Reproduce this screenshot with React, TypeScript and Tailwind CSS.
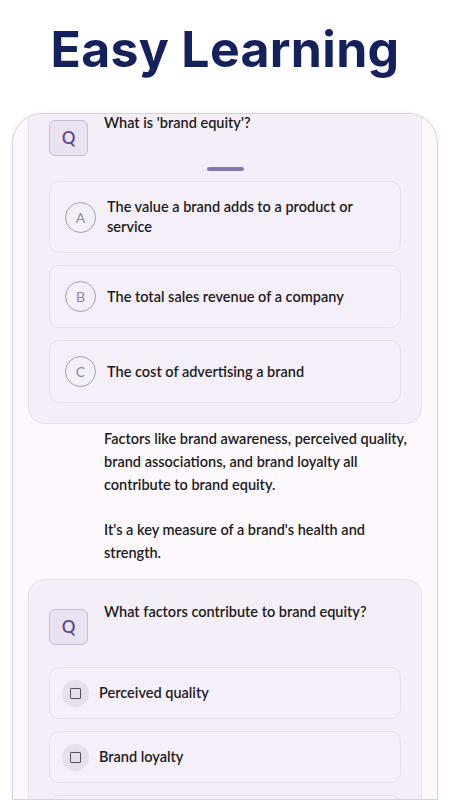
import React from "react";

const body = { fontFamily: "Lato, 'Noto Sans', sans-serif" };

function QBadge() {
  return (
    <div className="mt-[7px] flex h-[36px] w-[39px] shrink-0 items-center justify-center rounded-md border border-[#c6bcdb] bg-[#e8e2f1] text-[17px] font-semibold text-[#5b4b8c]">
      Q
    </div>
  );
}

function LetterOption({ letter, text, tall }: { letter: string; text: string; tall?: boolean }) {
  return (
    <div
      className={
        "flex items-center gap-[11px] rounded-[10px] border border-[#e6dfee] bg-[#f5eff9] px-[15px] " +
        (tall ? "h-[72px]" : "h-[63px]")
      }
    >
      <div className="flex h-[31px] w-[31px] shrink-0 items-center justify-center rounded-full border border-[#a29ead] text-[14px] text-[#8d8996]">
        {letter}
      </div>
      <div className="text-[14.5px] leading-[20px] font-semibold text-[#1d1c20]">{text}</div>
    </div>
  );
}

function CheckOption({ text }: { text: string }) {
  return (
    <div className="flex h-[52px] items-center gap-[10px] rounded-[10px] border border-[#e6dfee] bg-[#f5eff9] px-[12px]">
      <div className="flex h-[27px] w-[27px] shrink-0 items-center justify-center rounded-full bg-[#e6e0ea]">
        <div className="h-[11px] w-[11px] rounded-[1px] border-[1.5px] border-[#55525c]" />
      </div>
      <div className="text-[14.5px] font-semibold text-[#1d1c20]">{text}</div>
    </div>
  );
}

export default function App() {
  return (
    <div className="h-[800px] w-[450px] overflow-hidden bg-white" style={body}>
      <div className="flex h-[113px] justify-center pt-[20px]">
        <h1
          className="text-[50px] leading-[58px] font-bold tracking-[0.3px] text-[#14215c]"
          style={{ fontFamily: "Inter, sans-serif" }}
        >
          Easy Learning
        </h1>
      </div>

      <div className="mx-[12px] h-[687px] overflow-hidden rounded-t-[30px] border border-[#d9d0e8] bg-[#fcf8fd] px-[15px] shadow-[0_0_6px_rgba(0,0,0,0.05)]">
        <div className="-mt-[22px] rounded-[16px] border border-[#e6dfec] bg-[#f4eef8] px-[20px] pt-[20px] pb-[20px]">
          <div className="flex items-start gap-[16px]">
            <QBadge />
            <div className="text-[14.5px] leading-[20px] font-semibold text-[#1d1c20]">
              What is 'brand equity'?
            </div>
          </div>
          <div className="flex h-[25px] items-center justify-center">
            <div className="h-[4px] w-[37px] rounded-full bg-[#8576b0]" />
          </div>
          <div className="flex flex-col gap-[12px]">
            <LetterOption letter="A" text="The value a brand adds to a product or service" tall />
            <LetterOption letter="B" text="The total sales revenue of a company" />
            <LetterOption letter="C" text="The cost of advertising a brand" />
          </div>
        </div>

        <div className="mt-[3px] pr-[8px] pl-[76px] text-[14.5px] leading-[23px] font-semibold text-[#1d1c20]">
          <p>
            Factors like brand awareness, perceived quality, brand associations, and brand loyalty all
            contribute to brand equity.
          </p>
          <p className="mt-[22px]">It's a key measure of a brand's health and strength.</p>
        </div>

        <div className="mt-[15px] rounded-[16px] border border-[#e6dfec] bg-[#f4eef8] px-[20px] pt-[22px] pb-[20px]">
          <div className="flex items-start gap-[16px]">
            <QBadge />
            <div className="text-[14.5px] leading-[20px] font-semibold text-[#1d1c20]">
              What factors contribute to brand equity?
            </div>
          </div>
          <div className="mt-[22px] flex flex-col gap-[12px]">
            <CheckOption text="Perceived quality" />
            <CheckOption text="Brand loyalty" />
            <div className="h-[52px] rounded-[10px] border border-[#e6dfee] bg-[#f5eff9]" />
          </div>
        </div>
      </div>
    </div>
  );
}
